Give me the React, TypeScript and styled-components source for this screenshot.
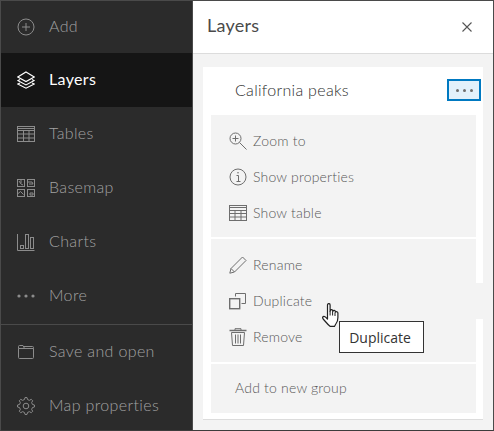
import React from 'react';
import styled, { createGlobalStyle } from 'styled-components';

const GlobalStyle = createGlobalStyle`
  html, body {
    margin: 0;
    padding: 0;
    background: #fff;
  }
  * {
    box-sizing: border-box;
  }
`;

// eight rounded-ish teeth round the centre of an 18px box
function gearOutline() {
  const points: string[] = [];
  const teeth = 8;
  for (let i = 0; i < teeth; i++) {
    const a = (i / teeth) * Math.PI * 2;
    const step = Math.PI / teeth;
    const corners: [number, number][] = [
      [6.6, a - step * 0.62],
      [8.5, a - step * 0.3],
      [8.5, a + step * 0.3],
      [6.6, a + step * 0.62],
    ];
    corners.forEach(([r, t]) => {
      points.push(`${(9 + r * Math.cos(t)).toFixed(2)} ${(9 + r * Math.sin(t)).toFixed(2)}`);
    });
  }
  return `M${points.join('L')}Z`;
}

const sidebarItems = [
  { label: 'Add', icon: <AddIcon /> },
  { label: 'Layers', icon: <LayersIcon />, active: true },
  { label: 'Tables', icon: <TableIcon /> },
  { label: 'Basemap', icon: <BasemapIcon /> },
  { label: 'Charts', icon: <ChartsIcon /> },
  { label: 'More', icon: <DotsIcon /> },
];

const sidebarFooter = [
  { label: 'Save and open', icon: <FolderIcon /> },
  { label: 'Map properties', icon: <GearIcon /> },
];

export default function App() {
  return (
    <>
      <GlobalStyle />
      <Frame>
        <Sidebar>
          <NavGroup>
            {sidebarItems.map((item) => (
              <NavItem key={item.label} $active={item.active}>
                <NavIcon>{item.icon}</NavIcon>
                <NavLabel>{item.label}</NavLabel>
              </NavItem>
            ))}
          </NavGroup>
          <NavFooter>
            {sidebarFooter.map((item) => (
              <NavItem key={item.label}>
                <NavIcon>{item.icon}</NavIcon>
                <NavLabel>{item.label}</NavLabel>
              </NavItem>
            ))}
          </NavFooter>
        </Sidebar>

        <Panel>
          <PanelHeader>
            <PanelTitle>Layers</PanelTitle>
            <CloseIcon />
          </PanelHeader>
          <PanelBody>
            <LayerCard>
              <LayerHeader>
                <LayerName>California peaks</LayerName>
                <OptionsButton>
                  <OptionsDot />
                  <OptionsDot />
                  <OptionsDot />
                </OptionsButton>
              </LayerHeader>

              <MenuGroup>
                <MenuRow>
                  <ZoomIcon />
                  <MenuLabel>Zoom to</MenuLabel>
                </MenuRow>
                <MenuRow>
                  <InfoIcon />
                  <MenuLabel>Show properties</MenuLabel>
                </MenuRow>
                <MenuRow>
                  <SmallTableIcon />
                  <MenuLabel>Show table</MenuLabel>
                </MenuRow>
              </MenuGroup>

              <MenuGroup $second>
                <MenuRow>
                  <PencilIcon />
                  <MenuLabel>Rename</MenuLabel>
                </MenuRow>
                <MenuRow $hovered>
                  <DuplicateIcon />
                  <MenuLabel>Duplicate</MenuLabel>
                </MenuRow>
                <MenuRow>
                  <TrashIcon />
                  <MenuLabel>Remove</MenuLabel>
                </MenuRow>
              </MenuGroup>

              <AddGroupRow>
                <MenuLabel>Add to new group</MenuLabel>
              </AddGroupRow>
            </LayerCard>
          </PanelBody>
        </Panel>

        <HandCursor />
        <Tooltip>Duplicate</Tooltip>
      </Frame>
    </>
  );
}

function AddIcon() {
  return (
    <svg width="18" height="18" viewBox="0 0 18 18" fill="none" stroke="#8c8c8c" strokeWidth="1">
      <circle cx="9" cy="9" r="8" />
      <path d="M9 5v8M5 9h8" />
    </svg>
  );
}

function LayersIcon() {
  return (
    <svg width="18" height="18" viewBox="0 0 18 18" fill="none" stroke="#fff" strokeWidth="1.100">
      <path d="M9 1 L17.200 6 L9 10.600 L.8 6 Z" />
      <path d="M3 8.400 L.8 9.600 L9 14 L17.200 9.600 L15 8.400" />
      <path d="M3 12 L.8 13 L9 17.200 L17.200 13 L15 12" />
    </svg>
  );
}

function TableIcon() {
  return (
    <svg width="18" height="16" viewBox="0 0 18 16" fill="none" stroke="#8c8c8c" strokeWidth="1">
      <rect x=".5" y=".5" width="17" height="15" />
      <path d="M.5 2.500h17M.5 4.500h17M.5 8h17M.5 12h17M6.500 4.500v11M12 4.500v11" />
    </svg>
  );
}

function BasemapIcon() {
  return (
    <svg width="18" height="18" viewBox="0 0 18 18" fill="none" stroke="#8c8c8c" strokeWidth="1">
      <rect x=".5" y=".5" width="7" height="7" />
      <rect x="10.500" y=".5" width="7" height="7" />
      <rect x=".5" y="10.500" width="7" height="7" />
      <rect x="10.500" y="10.500" width="7" height="7" />
      <path d="M2 2l2 3 2 1M4 1v3M11 3h4l1 2h-4M.5 15l3-2.500 3 3M13 14h3v2h-3z" />
    </svg>
  );
}

function ChartsIcon() {
  return (
    <svg width="18" height="17" viewBox="0 0 18 17" fill="none" stroke="#8c8c8c" strokeWidth="1">
      <path d="M.5 0v16.500h17" />
      <rect x="3.500" y="11.500" width="3" height="3" />
      <rect x="8.500" y=".5" width="3" height="14" />
      <rect x="13.500" y="3.500" width="3" height="11" />
    </svg>
  );
}

function DotsIcon() {
  return (
    <svg width="18" height="4" viewBox="0 0 18 4" fill="#8c8c8c">
      <circle cx="2" cy="2" r="1.600" />
      <circle cx="9" cy="2" r="1.600" />
      <circle cx="16" cy="2" r="1.600" />
    </svg>
  );
}

function FolderIcon() {
  return (
    <svg width="16" height="14" viewBox="0 0 16 14" fill="none" stroke="#8c8c8c" strokeWidth="1">
      <path d="M1.500 13.500h13a1 1 0 0 0 1-1V3.500H.5v9a1 1 0 0 0 1 1z" />
      <path d="M.5 3.500V1.500a1 1 0 0 1 1-1h3.500l1.500 3M6 1.500h8.500a1 1 0 0 1 1 1v1" />
    </svg>
  );
}

function GearIcon() {
  return (
    <svg width="18" height="18" viewBox="0 0 18 18" fill="none" stroke="#8c8c8c" strokeWidth="1" strokeLinejoin="round">
      <circle cx="9" cy="9" r="2.800" />
      <path d={gearOutline()} />
    </svg>
  );
}

function CloseIcon() {
  return (
    <CloseSvg viewBox="0 0 10 10" fill="none" stroke="#555" strokeWidth="1.100">
      <path d="M.5 .5l9 9M9.500 .5l-9 9" />
    </CloseSvg>
  );
}

function ZoomIcon() {
  return (
    <MenuSvg viewBox="0 0 18 18" fill="none" stroke="#6e6e6e" strokeWidth="1">
      <circle cx="6.500" cy="6.500" r="5.500" />
      <path d="M6.500 3.500v6M3.500 6.500h6M10.500 10.500l7 7" />
    </MenuSvg>
  );
}

function InfoIcon() {
  return (
    <MenuSvg viewBox="0 0 18 18" fill="none" stroke="#6e6e6e" strokeWidth="1">
      <circle cx="9" cy="9" r="8" />
      <path d="M7.500 7.500H9.500V13M7.500 13.500h4" />
      <circle cx="9" cy="4.800" r=".8" fill="#6e6e6e" stroke="none" />
    </MenuSvg>
  );
}

function SmallTableIcon() {
  return (
    <MenuSvg viewBox="0 0 18 18" fill="none" stroke="#6e6e6e" strokeWidth="1">
      <rect x=".5" y="1.500" width="17" height="15" />
      <path d="M.5 3.500h17M.5 6.500h17M.5 9.500h17M.5 13h17M6 6.500v10M12 6.500v10" />
    </MenuSvg>
  );
}

function PencilIcon() {
  return (
    <MenuSvg viewBox="0 0 18 18" fill="none" stroke="#6e6e6e" strokeWidth="1">
      <path d="M.8 17.200l1.200-4.700L13.500 1l3.500 3.500L5.500 16z" />
      <path d="M2 12.500L5.500 16" />
    </MenuSvg>
  );
}

function DuplicateIcon() {
  return (
    <MenuSvg viewBox="0 0 18 18" fill="none" stroke="#6e6e6e" strokeWidth="1">
      <rect x=".7" y="6.700" width="10" height="10" strokeWidth="1.400" />
      <path d="M6.500 4.500v-3h10v10h-4" />
    </MenuSvg>
  );
}

function TrashIcon() {
  return (
    <MenuSvg viewBox="0 0 18 18" fill="none" stroke="#6e6e6e" strokeWidth="1">
      <path d="M.5 2.500h17" strokeWidth="1.500" />
      <path d="M6 2V.7h6V2" />
      <path d="M2.500 4.500l1 13h11l1-13z" />
      <path d="M6.500 6.500v9M9 6.500v9M11.500 6.500v9" />
    </MenuSvg>
  );
}

function HandCursor() {
  return (
    <CursorSvg viewBox="0 0 18 24">
      <path
        d="M5.500 2c0-1.900 2.600-1.900 2.600 0v6.200l.2-.7c.3-1.300 2.300-1.200 2.400.1l.1.8.2-.4c.4-1.100 2.200-.9 2.300.3l.1.9.3-.2c.6-.7 2.200-.3 2.200 1v4.500c0 3-.7 4.500-1.800 6-.7 1-1 2-1.600 2.800H8c-1.800-1.300-3.600-3.700-6.800-7.300-1-1.100-.6-2.600.8-2.600 1 0 2.200 1.200 3.500 2.600z"
        fill="#fff"
        stroke="#222"
        strokeWidth="1.200"
        strokeLinejoin="round"
      />
      <path d="M8.100 8v4.500M10.600 8.500v4M13 9.500v3.500" stroke="#222" strokeWidth="1" fill="none" />
    </CursorSvg>
  );
}

const Frame = styled.div`
  position: relative;
  display: flex;
  width: 494px;
  height: 431px;
  overflow: hidden;
  border: 1px solid #4a4a4a;
  border-bottom-color: #3c3c3c;
  font-family: Lato, 'Liberation Sans', sans-serif;
`;

const Sidebar = styled.nav`
  display: flex;
  flex-direction: column;
  flex: none;
  width: 192px;
  background: #2b2b2b;
  border-right: 1px solid #4a4a4a;
`;

const NavGroup = styled.div`
  display: flex;
  flex-direction: column;
  padding-bottom: 1px;
  border-bottom: 1px solid #4a4a4a;

  & > :first-child {
    height: 52px;
  }
`;

const NavFooter = styled.div`
  display: flex;
  flex-direction: column;
`;

const NavItem = styled.div<{ $active?: boolean }>`
  display: flex;
  align-items: center;
  height: 54px;
  padding-left: 16px;
  background: ${({ $active }) => ($active ? '#151515' : 'transparent')};
  color: ${({ $active }) => ($active ? '#ffffff' : '#a2a2a2')};
  font-size: 16px;
  font-weight: ${({ $active }) => ($active ? 400 : 300)};
  letter-spacing: 0.35px;
`;

const NavIcon = styled.span`
  display: flex;
  justify-content: center;
  align-items: center;
  width: 18px;
  margin-right: 14px;
`;

const NavLabel = styled.span`
  margin-bottom: 4px;
`;

const Panel = styled.main`
  display: flex;
  flex-direction: column;
  flex: 1;
  min-width: 0;
  background: #f3f3f3;
`;

const PanelHeader = styled.header`
  display: flex;
  justify-content: space-between;
  align-items: center;
  flex: none;
  height: 53px;
  padding: 0 21px 1px 14px;
  background: #fff;
  border-bottom: 1px solid #dcdcdc;
`;

const PanelTitle = styled.h2`
  margin: 0 0 3px;
  color: #4a4a4a;
  font-size: 18px;
  font-weight: 400;
  letter-spacing: 0.25px;
`;

const CloseSvg = styled.svg`
  width: 10px;
  height: 10px;
`;

const PanelBody = styled.div`
  flex: 1;
  padding: 13px 10px 0 10px;
`;

const LayerCard = styled.section`
  display: flex;
  flex-direction: column;
  height: 353px;
  padding: 0 7px 6px 8px;
  background: #fff;
  border-bottom: 1px solid #dcdcdc;
`;

const LayerHeader = styled.div`
  display: flex;
  justify-content: space-between;
  align-items: center;
  flex: none;
  height: 48px;
  padding: 0 2px 2px 24px;
  margin-right: -7px;
`;

const LayerName = styled.span`
  margin-bottom: 2px;
  color: #2e2e2e;
  font-size: 16px;
  font-weight: 300;
  letter-spacing: 0.3px;
`;

const OptionsButton = styled.div`
  display: flex;
  justify-content: center;
  align-items: center;
  gap: 4px;
  width: 34px;
  height: 22px;
  background: #e2f1fb;
  border: 2px solid #0079c1;
`;

const OptionsDot = styled.span`
  width: 3px;
  height: 3px;
  border-radius: 50%;
  background: #6e6e6e;
`;

const MenuGroup = styled.div<{ $second?: boolean }>`
  display: flex;
  flex-direction: column;
  flex: none;
  margin-top: ${({ $second }) => ($second ? '2px' : '0')};
  padding: 8px 0 ${({ $second }) => ($second ? '7px' : '6px')};
  background: #f3f3f3;
`;

const MenuRow = styled.div<{ $hovered?: boolean }>`
  display: flex;
  align-items: center;
  gap: 6px;
  height: 36px;
  padding-left: 18px;
  margin-right: ${({ $hovered }) => ($hovered ? '-7px' : '0')};
  background: #f3f3f3;
`;

const MenuLabel = styled.span`
  margin-bottom: 2px;
  color: #585858;
  font-size: 14px;
  font-weight: 300;
  letter-spacing: 0.2px;
`;

const MenuSvg = styled.svg`
  flex: none;
  width: 18px;
  height: 18px;
`;

const AddGroupRow = styled.div`
  display: flex;
  align-items: center;
  flex: none;
  height: 49px;
  margin-top: 2px;
  padding-left: 24px;
  background: #f3f3f3;
`;

const CursorSvg = styled.svg`
  position: absolute;
  left: 321px;
  top: 302px;
  width: 18px;
  height: 24px;
`;

const Tooltip = styled.div`
  position: absolute;
  left: 338px;
  top: 320px;
  display: flex;
  justify-content: center;
  align-items: center;
  width: 85px;
  height: 32px;
  padding-right: 3px;
  background: #fff;
  border: 1px solid #333;
  color: #333;
  font-family: 'Open Sans', sans-serif;
  font-size: 14px;
`;
